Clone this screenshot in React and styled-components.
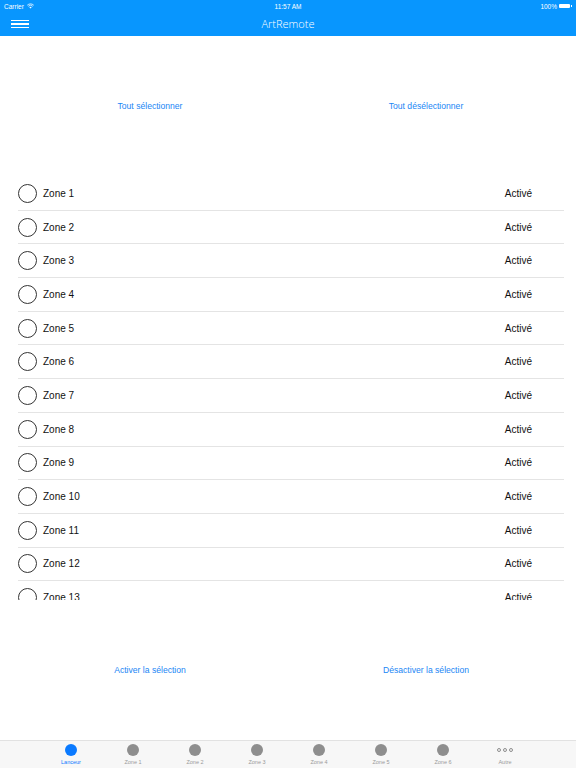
import React from "react";
import styled, { createGlobalStyle } from "styled-components";

const GlobalStyle = createGlobalStyle`
  html, body {
    margin: 0;
    padding: 0;
    background: #ffffff;
    font-family: "Liberation Sans", Arial, sans-serif;
  }
`;

const zones = Array.from({ length: 13 }, (_, i) => `Zone ${i + 1}`);
const tabs = ["Lanceur", "Zone 1", "Zone 2", "Zone 3", "Zone 4", "Zone 5", "Zone 6"];

const Page = styled.div`
  width: 576px;
  height: 768px;
  display: flex;
  flex-direction: column;
  overflow: hidden;
`;

const Header = styled.header`
  height: 36px;
  background: #0896fe;
  color: #ffffff;
  display: flex;
  flex-direction: column;
`;

const StatusBar = styled.div`
  height: 12px;
  display: grid;
  grid-template-columns: 1fr auto 1fr;
  align-items: center;
  padding: 0 4px;
  font-size: 6.5px;
`;

const StatusLeft = styled.div`
  display: flex;
  align-items: center;
  gap: 3px;
`;

const StatusRight = styled.div`
  display: flex;
  align-items: center;
  justify-content: flex-end;
  gap: 2px;
`;

const Battery = styled.div`
  width: 11px;
  height: 4px;
  background: #ffffff;
  border-radius: 1px;
  margin-right: 2px;
  position: relative;
  &::after {
    content: "";
    position: absolute;
    right: -2px;
    top: 1px;
    width: 1px;
    height: 2px;
    background: #ffffff;
  }
`;

const NavBar = styled.div`
  flex: 1;
  display: grid;
  grid-template-columns: 60px 1fr 60px;
  align-items: center;
`;

const Menu = styled.div`
  margin-left: 11px;
  width: 18px;
  display: flex;
  flex-direction: column;
  gap: 2.5px;
  span {
    display: block;
    height: 1.2px;
    background: #ffffff;
  }
`;

const Title = styled.div`
  text-align: center;
  font-family: "Open Sans", "Liberation Sans", sans-serif;
  font-weight: 300;
  font-size: 11px;
  padding-bottom: 2px;
`;

const ActionBar = styled.div`
  height: 140px;
  padding: 0 12px;
  display: grid;
  grid-template-columns: 1fr 1fr;
  align-items: center;
`;

const LinkButton = styled.button`
  border: none;
  background: none;
  padding: 0;
  justify-self: center;
  color: #1a86f5;
  font-family: "Liberation Sans", Arial, sans-serif;
  font-size: 8.6px;
  cursor: pointer;
`;

const List = styled.div`
  height: 424px;
  box-sizing: border-box;
  padding: 1px 12px 0 18px;
  overflow: hidden;
`;

const Row = styled.div`
  height: 33.7px;
  box-sizing: border-box;
  display: flex;
  align-items: center;
  border-bottom: 1px solid #e4e4e4;
  font-size: 10px;
  color: #111111;
`;

const Radio = styled.span`
  width: 17px;
  height: 17px;
  border: 1px solid #333333;
  border-radius: 50%;
  margin-right: 6px;
  flex-shrink: 0;
`;

const Name = styled.span`
  flex: 1;
`;

const Status = styled.span`
  margin-right: 32px;
`;

const TabBar = styled.nav`
  margin-top: auto;
  height: 28px;
  box-sizing: border-box;
  border-top: 1px solid #e2e2e2;
  background: #f7f7f7;
  display: flex;
  justify-content: center;
`;

const Tab = styled.div`
  width: 62px;
  display: flex;
  flex-direction: column;
  align-items: center;
  padding-top: 3px;
  gap: 3px;
  font-size: 5.5px;
  color: ${(p) => (p.$active ? "#0a7aff" : "#9a9a9a")};
`;

const TabDot = styled.span`
  width: 12px;
  height: 12px;
  border-radius: 50%;
  background: ${(p) => (p.$active ? "#0a7aff" : "#8e8e8e")};
`;

const MoreDots = styled.span`
  height: 12px;
  display: flex;
  align-items: center;
  gap: 1.5px;
  i {
    width: 2.5px;
    height: 2.5px;
    border-radius: 50%;
    border: 0.6px solid #8e8e8e;
  }
`;

const Wifi = () => (
  <svg width="7" height="6" viewBox="0 0 14 11">
    <path d="M7 10.5 L4.6 8 A3.4 3.4 0 0 1 9.4 8 Z" fill="#fff" />
    <path d="M2.6 6 A6.3 6.3 0 0 1 11.4 6" stroke="#fff" strokeWidth="1.6" fill="none" />
    <path d="M0.6 3.9 A9.2 9.2 0 0 1 13.4 3.9" stroke="#fff" strokeWidth="1.6" fill="none" />
  </svg>
);

export default function App() {
  return (
    <Page>
      <GlobalStyle />
      <Header>
        <StatusBar>
          <StatusLeft>
            Carrier <Wifi />
          </StatusLeft>
          <div>11:57 AM</div>
          <StatusRight>
            100% <Battery />
          </StatusRight>
        </StatusBar>
        <NavBar>
          <Menu>
            <span />
            <span />
            <span />
          </Menu>
          <Title>ArtRemote</Title>
          <div />
        </NavBar>
      </Header>

      <ActionBar>
        <LinkButton>Tout sélectionner</LinkButton>
        <LinkButton>Tout désélectionner</LinkButton>
      </ActionBar>

      <List>
        {zones.map((z) => (
          <Row key={z}>
            <Radio />
            <Name>{z}</Name>
            <Status>Activé</Status>
          </Row>
        ))}
      </List>

      <ActionBar>
        <LinkButton>Activer la sélection</LinkButton>
        <LinkButton>Désactiver la sélection</LinkButton>
      </ActionBar>

      <TabBar>
        {tabs.map((t, i) => (
          <Tab key={t} $active={i === 0}>
            <TabDot $active={i === 0} />
            {t}
          </Tab>
        ))}
        <Tab>
          <MoreDots>
            <i />
            <i />
            <i />
          </MoreDots>
          Autre
        </Tab>
      </TabBar>
    </Page>
  );
}
